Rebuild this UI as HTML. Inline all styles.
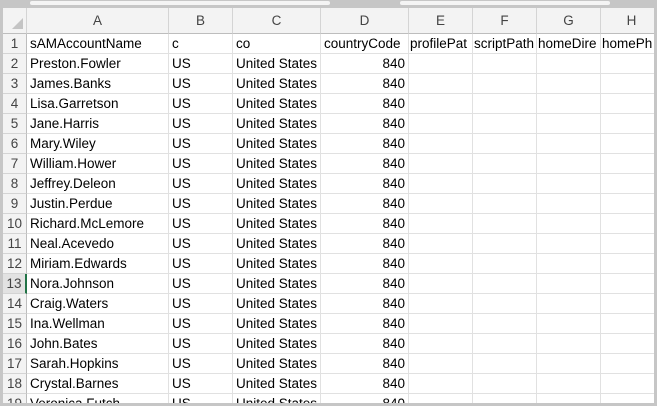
<!DOCTYPE html>
<html><head><style>
body{margin:0;width:657px;height:406px;overflow:hidden;background:#c6c6c6;font-family:"Liberation Sans",sans-serif;}
#s{position:absolute;left:3px;top:8px;width:651px;height:395px;background:#fff;overflow:hidden;}
.c{position:absolute;height:20px;line-height:20px;font-size:13.5px;color:#000;white-space:nowrap;overflow:hidden;box-sizing:border-box;padding:0 3px;border-right:1px solid #e1e1e1;border-bottom:1px solid #e1e1e1;}
.h{background:#f3f3f3;color:#444;text-align:center;border-right:1px solid #d4d4d4;border-bottom:1px solid #bdbdbd;font-size:13.5px;}
.r{background:#f3f3f3;color:#444;text-align:center;border-right:1px solid #bdbdbd;border-bottom:1px solid #d4d4d4;padding:0;}
.n{text-align:right}
</style></head><body>
<div style="position:absolute;left:30px;top:1px;width:300px;height:4px;background:#f4f4f4;border-radius:2px"></div>
<div style="position:absolute;left:400px;top:1px;width:210px;height:4px;background:#f4f4f4;border-radius:2px"></div>
<div id="s"></div>
<script>
var s=document.getElementById('s');
var cols=[0,24,166,230,318,406,470,534,598,660];
var L=['','A','B','C','D','E','F','G','H'];
function cell(x,y,w,h,t,cls){var d=document.createElement('div');d.className='c '+cls;d.style.left=x+'px';d.style.top=y+'px';d.style.width=w+'px';d.style.height=h+'px';d.style.lineHeight=h+'px';d.textContent=t;s.appendChild(d);return d;}
for(var i=0;i<9;i++){var d=cell(cols[i],0,cols[i+1]-cols[i],26,L[i],'h');}
var tri=document.createElement('div');tri.style.cssText='position:absolute;left:9px;top:10px;width:0;height:0;border-left:11px solid transparent;border-bottom:11px solid #c4c4c4';s.appendChild(tri);
var names=['sAMAccountName','Preston.Fowler','James.Banks','Lisa.Garretson','Jane.Harris','Mary.Wiley','William.Hower','Jeffrey.Deleon','Justin.Perdue','Richard.McLemore','Neal.Acevedo','Miriam.Edwards','Nora.Johnson','Craig.Waters','Ina.Wellman','John.Bates','Sarah.Hopkins','Crystal.Barnes','Veronica.Futch'];
for(var r=0;r<19;r++){var y=26+r*20;
 var rh=cell(0,y,24,20,String(r+1),'r');
 if(r==12){rh.style.background='#e2e2e2';rh.style.borderRight='2px solid #217346';}
 var row=r==0?[names[0],'c','co','countryCode','profilePat','scriptPath','homeDire','homePh']:[names[r],'US','United States','840','','','',''];
 for(var i=1;i<9;i++){var d=cell(cols[i],y,cols[i+1]-cols[i],20,row[i-1],(r>0&&i==4)?'n':'');if(r==0&&i>=5)d.style.padding='0 1px';}
}
</script>
</body></html>
